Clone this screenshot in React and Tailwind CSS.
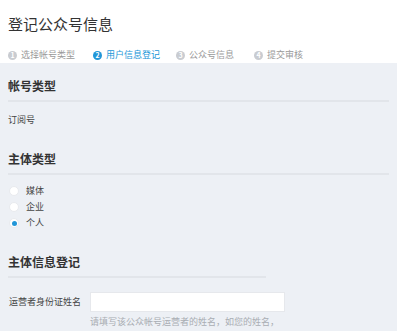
const steps = [
  { n: 1, label: "选择帐号类型", x: "w-[85px]" },
  { n: 2, label: "用户信息登记", active: true, x: "w-[83px]" },
  { n: 3, label: "公众号信息", x: "w-[78px]" },
  { n: 4, label: "提交审核", x: "w-[60px]" },
];

const Radio = ({ checked, label }) => (
  <div className="flex items-center h-4">
    <span className="w-[10px] h-[10px] rounded-full bg-white border border-[#e8eaee] flex items-center justify-center ml-[1px]">
      {checked && <span className="w-[5px] h-[5px] rounded-full bg-[#2196d8]" />}
    </span>
    <span className="ml-[7px] text-[9px] text-[#444]">{label}</span>
  </div>
);

const SectionTitle = ({ children, short }) => (
  <div className={short ? "w-[258px]" : ""}>
    <div className="text-[12px] font-semibold text-[#333] leading-[16px]">{children}</div>
    <div className="mt-[6px] h-[2px] bg-[#e2e5ea]" />
  </div>
);

export default function App() {
  return (
    <div
      className="w-[400px] h-[335px] bg-white overflow-hidden"
      style={{ fontFamily: '"Noto Sans CJK SC", "Noto Sans", sans-serif' }}
    >
      <div className="h-[63px] px-[8px] pt-[14px]">
        <div className="text-[15px] text-[#333] leading-[20px]">登记公众号信息</div>
        <div className="flex items-center mt-[15px] text-[9px] leading-[12px]">
          {steps.map((s) => (
            <div key={s.n} className={"flex items-center " + s.x}>
              <span
                className={
                  "w-[9px] h-[9px] rounded-full text-white text-[7px] leading-none flex items-center justify-center font-bold " +
                  (s.active ? "bg-[#2196d8]" : "bg-[#c9ccd1]")
                }
              >
                {s.n}
              </span>
              <span className={"ml-[4px] " + (s.active ? "text-[#2196d8]" : "text-[#9a9a9a]")}>
                {s.label}
              </span>
            </div>
          ))}
        </div>
      </div>
      <div className="w-[397px] h-[268px] bg-[#edf0f5] px-[8px] pt-[15px]">
        <SectionTitle>帐号类型</SectionTitle>
        <div className="mt-[11px] text-[9px] text-[#444] leading-[14px]">订阅号</div>
        <div className="mt-[24px]">
          <SectionTitle>主体类型</SectionTitle>
        </div>
        <div className="mt-[8px] flex flex-col">
          <Radio label="媒体" />
          <Radio label="企业" />
          <Radio checked label="个人" />
        </div>
        <div className="mt-[23px]">
          <SectionTitle short>主体信息登记</SectionTitle>
        </div>
        <div className="mt-[14px] flex items-start">
          <div className="w-[82px] text-[9px] text-[#444] leading-[20px] pl-[1px]">运营者身份证姓名</div>
          <div>
            <div className="w-[195px] h-[20px] bg-white border border-[#e6e8ec]" />
            <div className="mt-[3px] text-[9px] text-[#a9adb3] leading-[14px]">
              请填写该公众帐号运营者的姓名，如您的姓名，
            </div>
          </div>
        </div>
      </div>
    </div>
  );
}
